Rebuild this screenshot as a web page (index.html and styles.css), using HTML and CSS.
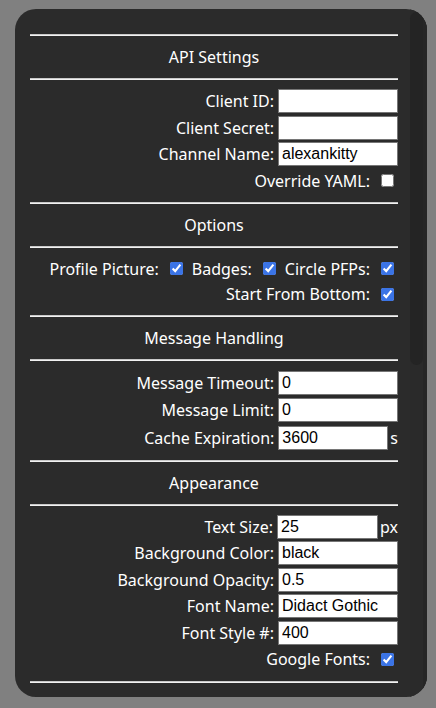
FILE: index.html
```html
<!DOCTYPE html>
<html lang="en">
<head>
<meta charset="utf-8">
<title>Settings</title>
<link rel="stylesheet" href="styles.css">
</head>
<body>
<div class="panel">
  <div class="content">
    <hr class="rule">
    <div class="title">API Settings</div>
    <hr class="rule">
    <div class="row"><label>Client ID:</label><input class="field" type="text"></div>
    <div class="row"><label>Client Secret:</label><input class="field" type="password"></div>
    <div class="row"><label>Channel Name:</label><input class="field" type="text" value="alexankitty"></div>
    <div class="row"><label>Override YAML:</label><input class="check" type="checkbox"></div>
    <hr class="rule">
    <div class="title">Options</div>
    <hr class="rule">
    <div class="row crow">
      <label>Profile Picture:</label><input class="check" type="checkbox" checked>
      <label class="gap">Badges:</label><input class="check" type="checkbox" checked>
      <label class="gap">Circle PFPs:</label><input class="check" type="checkbox" checked>
    </div>
    <div class="row crow"><label>Start From Bottom:</label><input class="check" type="checkbox" checked></div>
    <hr class="rule">
    <div class="title">Message Handling</div>
    <hr class="rule">
    <div class="row mrow"><label>Message Timeout:</label><input class="field" type="text" value="0"></div>
    <div class="row mrow"><label>Message Limit:</label><input class="field" type="text" value="0"></div>
    <div class="row mrow"><label>Cache Expiration:</label><input class="field field-s" type="text" value="3600"><span class="unit">s</span></div>
    <hr class="rule">
    <div class="title">Appearance</div>
    <hr class="rule">
    <div class="row"><label>Text Size:</label><input class="field field-px" type="text" value="25"><span class="unit">px</span></div>
    <div class="row"><label>Background Color:</label><input class="field" type="text" value="black"></div>
    <div class="row"><label>Background Opacity:</label><input class="field" type="text" value="0.5"></div>
    <div class="row"><label>Font Name:</label><input class="field" type="text" value="Didact Gothic"></div>
    <div class="row"><label>Font Style #:</label><input class="field" type="text" value="400"></div>
    <div class="row"><label>Google Fonts:</label><input class="check" type="checkbox" checked></div>
    <hr class="rule">
  </div>
  <div class="scrollbar"><div class="thumb"></div></div>
</div>
</body>
</html>
```

FILE: styles.css
```css
html, body {
  margin: 0;
  padding: 0;
}
body {
  background: #808080;
  font-family: "Noto Sans", "DejaVu Sans", sans-serif;
  font-size: 16px;
  color: #ffffff;
  padding: 9px 9px 11px 15px;
}
.panel {
  width: 412px;
  height: 688px;
  background: #2b2b2b;
  border-radius: 21px;
  overflow: hidden;
  display: flex;
}
.content {
  flex: 1;
  min-width: 0;
  overflow: hidden;
  padding: 17px 12px 0 15px;
}
.scrollbar {
  width: 13px;
  flex: none;
  padding: 3px 0 0 0;
  border-right: 4px solid #262626;
  background: #2a2a2a;
}
.thumb {
  height: 353px;
  background: #242424;
  border-radius: 7px;
}
.rule {
  margin: 8px 0;
  height: 0;
  border: 0;
  border-top: 1px solid #c9c9c9;
  border-bottom: 1px solid #f2f2f2;
}
.title {
  height: 26px;
  line-height: 26px;
  text-align: center;
}
.row {
  height: 26.5px;
  display: flex;
  justify-content: flex-end;
  align-items: center;
  white-space: nowrap;
}
.crow {
  height: 25.5px;
}
.mrow {
  height: 27.5px;
}
.row label {
  margin-right: 4px;
}
.row label.gap {
  margin-left: 5px;
}
.field {
  box-sizing: border-box;
  width: 120px;
  height: 24px;
  margin: 0;
  padding: 1px 3px;
  border: 1px solid #767676;
  background: #ffffff;
  color: #000000;
  font-family: "Liberation Sans", Arial, sans-serif;
  font-size: 16px;
  outline: none;
}
.field-s {
  width: 110px;
}
.field-px {
  width: 101px;
}
.unit {
  margin-left: 2px;
}
.check {
  width: 13px;
  height: 13px;
  margin: 0 4px 0 7px;
  accent-color: #3b74e6;
}
```
